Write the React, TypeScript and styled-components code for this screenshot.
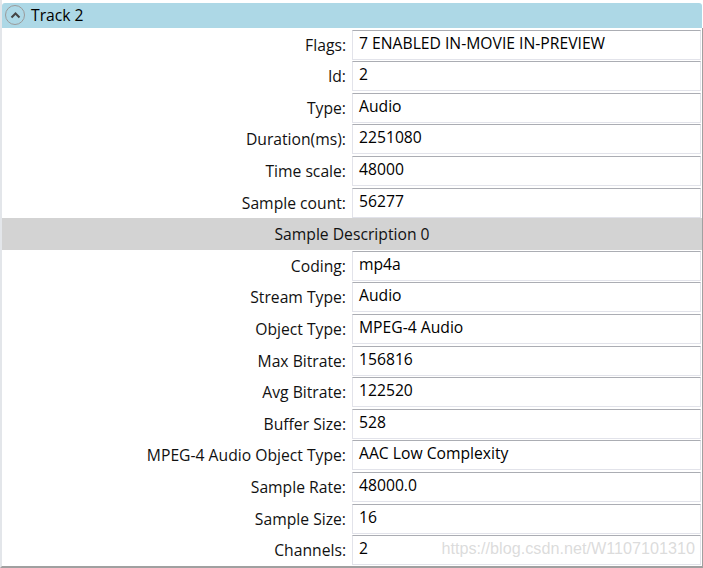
import React from "react";
import styled, { createGlobalStyle } from "styled-components";

const GlobalStyle = createGlobalStyle`
  html, body {
    margin: 0;
    padding: 0;
    background: #ffffff;
  }
  body {
    font-family: "Open Sans", "Noto Sans", sans-serif;
  }
`;

const Panel = styled.div`
  width: 703px;
  height: 568px;
  box-sizing: border-box;
  padding-top: 3px;
  border-left: 2px solid #e3e6ea;
  border-bottom: 2px solid #a0a0a0;
  overflow: hidden;
  display: flex;
  flex-direction: column;
  position: relative;
`;

const Header = styled.div`
  height: 26px;
  margin-right: 1px;
  background: #add8e6;
  border-radius: 3px 3px 0 0;
  display: flex;
  align-items: center;
  gap: 6px;
  padding-left: 3px;
  font-size: 15.7px;
  color: #000;
`;

const Toggle = styled.div`
  width: 20px;
  height: 20px;
  box-sizing: border-box;
  border-radius: 50%;
  border: 1.5px solid #9a9a9a;
  display: flex;
  align-items: center;
  justify-content: center;
`;

const Body = styled.div`
  display: flex;
  flex-direction: column;
  padding-top: 1px;
  border-right: 1px solid #a0a0a0;
  flex: 1;
`;

const Row = styled.div`
  display: grid;
  grid-template-columns: 344px 1fr;
  column-gap: 6px;
  height: 31.6px;
  align-items: center;
`;

const Label = styled.div`
  text-align: right;
  font-size: 15.7px;
  color: #111;
`;

const Value = styled.div`
  height: 30px;
  box-sizing: border-box;
  margin-right: 1px;
  border: 1px solid #e2e3ea;
  border-top-color: #abadb3;
  background: #fff;
  padding: 2px 6px 0 6px;
  font-size: 15.7px;
  color: #000;
  line-height: 21px;
  white-space: nowrap;
`;

const Section = styled.div`
  height: 31.6px;
  background: #d3d3d3;
  display: flex;
  align-items: center;
  justify-content: center;
  font-size: 15.7px;
  color: #111;
`;

const Watermark = styled.div`
  position: absolute;
  right: 8px;
  bottom: 8px;
  font-family: "Liberation Sans", Arial, sans-serif;
  font-size: 16.2px;
  color: rgba(190, 190, 190, 0.55);
  pointer-events: none;
`;

const trackFields: [string, string][] = [
  ["Flags:", "7 ENABLED IN-MOVIE IN-PREVIEW"],
  ["Id:", "2"],
  ["Type:", "Audio"],
  ["Duration(ms):", "2251080"],
  ["Time scale:", "48000"],
  ["Sample count:", "56277"],
];

const sampleFields: [string, string][] = [
  ["Coding:", "mp4a"],
  ["Stream Type:", "Audio"],
  ["Object Type:", "MPEG-4 Audio"],
  ["Max Bitrate:", "156816"],
  ["Avg Bitrate:", "122520"],
  ["Buffer Size:", "528"],
  ["MPEG-4 Audio Object Type:", "AAC Low Complexity"],
  ["Sample Rate:", "48000.0"],
  ["Sample Size:", "16"],
  ["Channels:", "2"],
];

const Field = ({ label, value }: { label: string; value: string }) => (
  <Row>
    <Label>{label}</Label>
    <Value>{value}</Value>
  </Row>
);

const App: React.FC = () => {
  return (
    <>
      <GlobalStyle />
      <Panel>
        <Header>
          <Toggle>
            <svg width="11" height="8" viewBox="0 0 11 8">
              <path d="M1.5 6.5 L5.5 2.5 L9.5 6.5" fill="none" stroke="#444" strokeWidth="2" />
            </svg>
          </Toggle>
          <span>Track 2</span>
        </Header>
        <Body>
          {trackFields.map(([l, v]) => (
            <Field key={l} label={l} value={v} />
          ))}
          <Section>Sample Description 0</Section>
          {sampleFields.map(([l, v]) => (
            <Field key={l} label={l} value={v} />
          ))}
        </Body>
        <Watermark>https://blog.csdn.net/W1107101310</Watermark>
      </Panel>
    </>
  );
};

export default App;
